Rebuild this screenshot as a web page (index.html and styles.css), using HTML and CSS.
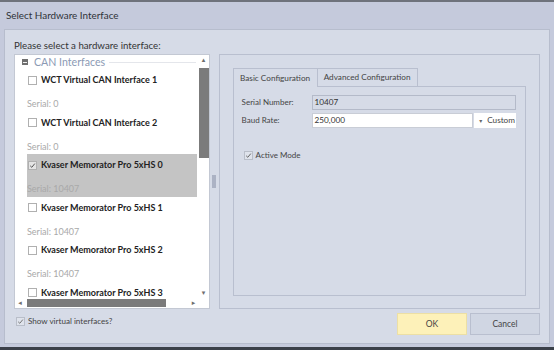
FILE: index.html
```html
<!DOCTYPE html>
<html lang="en">
<head>
  <meta charset="UTF-8" />
  <meta name="viewport" content="width=device-width, initial-scale=1.0"/>
  <title>Select Hardware Interface</title>
  <link rel="stylesheet" href="styles.css">
</head>
<body>

  <div class="top-edge"></div>
  <div class="title-bar">Select Hardware Interface</div>

  <div class="dialog">
    <div class="prompt">Please select a hardware interface:</div>

    <div class="main">
      <!-- Left: interface list -->
      <div class="list-box">
        <div class="list-content">
          <div class="group-header">
            <span class="collapse-box"></span>
            <span class="group-title">CAN Interfaces</span>
            <span class="group-line"></span>
          </div>

          <div class="item">
            <div class="item-title"><span class="check"></span>WCT Virtual CAN Interface 1</div>
            <div class="item-serial">Serial: 0</div>
          </div>
          <div class="item">
            <div class="item-title"><span class="check"></span>WCT Virtual CAN Interface 2</div>
            <div class="item-serial">Serial: 0</div>
          </div>
          <div class="item selected">
            <div class="item-title">
              <span class="check"><svg viewBox="0 0 7 7" width="7" height="7"><path d="M1.2 3.8 L2.8 5.3 L5.8 1.6" fill="none" stroke="#555" stroke-width="1"/></svg></span>Kvaser Memorator Pro 5xHS 0
            </div>
            <div class="item-serial">Serial: 10407</div>
          </div>
          <div class="item">
            <div class="item-title"><span class="check"></span>Kvaser Memorator Pro 5xHS 1</div>
            <div class="item-serial">Serial: 10407</div>
          </div>
          <div class="item">
            <div class="item-title"><span class="check"></span>Kvaser Memorator Pro 5xHS 2</div>
            <div class="item-serial">Serial: 10407</div>
          </div>
          <!-- last row is scrolled partly out of view; its serial line is hidden -->
          <div class="item">
            <div class="item-title"><span class="check"></span>Kvaser Memorator Pro 5xHS 3</div>
          </div>
        </div>

        <div class="vscroll">
          <span class="arrow">&#9652;</span>
          <div class="vtrack"><div class="vthumb"></div></div>
          <span class="arrow">&#9662;</span>
        </div>
        <div class="hscroll">
          <span class="arrow">&#9666;</span>
          <div class="htrack"><div class="hthumb"></div></div>
          <span class="arrow">&#9656;</span>
        </div>
        <div class="corner"></div>
      </div>

      <!-- Splitter -->
      <div class="splitter"><div class="grip"></div></div>

      <!-- Right: configuration -->
      <div class="config-group">
        <div class="tabs">
          <div class="tab active">Basic Configuration</div>
          <div class="tab">Advanced Configuration</div>
        </div>
        <div class="tab-page">
          <div class="field-row">
            <div class="field-label">Serial Number:</div>
            <div class="field-input readonly">10407</div>
          </div>
          <div class="field-row">
            <div class="field-label">Baud Rate:</div>
            <div class="field-input">250,000</div>
            <div class="field-drop"><span class="drop-arrow">&#9662;</span>Custom</div>
          </div>
          <div class="active-mode">
            <span class="check"><svg viewBox="0 0 7 7" width="7" height="7"><path d="M1.2 3.8 L2.8 5.3 L5.8 1.6" fill="none" stroke="#666" stroke-width="1"/></svg></span>
            <span>Active Mode</span>
          </div>
        </div>
      </div>
    </div>

    <div class="bottom">
      <div class="show-virtual">
        <span class="check"><svg viewBox="0 0 7 7" width="7" height="7"><path d="M1.2 3.8 L2.8 5.3 L5.8 1.6" fill="none" stroke="#777" stroke-width="1"/></svg></span>
        <span>Show virtual interfaces?</span>
      </div>
      <div class="buttons">
        <button class="btn ok">OK</button>
        <button class="btn">Cancel</button>
      </div>
    </div>
  </div>

  <div class="bottom-edge"></div>

</body>
</html>
```

FILE: styles.css
```css
html, body {
  margin: 0;
  padding: 0;
}

body {
  width: 554px;
  height: 350px;
  overflow: hidden;
  background: #c5cadc;
  font-family: "Lato", "Open Sans", sans-serif;
  font-size: 8.2px;
  color: #3a3a3a;
}

.top-edge {
  height: 2px;
  background: #6f737c;
}

.title-bar {
  height: 27px;
  line-height: 27px;
  padding-left: 6px;
  font-size: 9.9px;
  color: #2f3238;
}

.dialog {
  margin: 0 4px;
  padding: 8px 9px 0 9px;
  box-sizing: border-box;
  height: 315px;
  background: #d6dbe7;
  border: 1px solid #b7bdcd;
  display: flex;
  flex-direction: column;
}

.prompt {
  height: 16px;
  line-height: 14px;
  font-size: 9.7px;
  color: #333;
}

.main {
  display: flex;
  height: 255px;
}

/* list */
.list-box {
  width: 196px;
  box-sizing: border-box;
  border: 1px solid #c3c8d3;
  background: #fff;
  display: grid;
  grid-template-columns: 1fr 10px;
  grid-template-rows: 1fr 10px;
  overflow: hidden;
}

.list-content {
  overflow: hidden;
  padding-right: 1px;
}

.group-header {
  display: flex;
  align-items: center;
  height: 14px;
  padding-left: 7px;
}

.collapse-box {
  width: 6px;
  height: 6px;
  background: linear-gradient(#f2f2f2, #f2f2f2) center / 4px 1px no-repeat, #6f6f6f;
  margin-right: 6px;
  flex-shrink: 0;
}

.group-title {
  color: #8b9ab4;
  font-size: 10.6px;
  white-space: nowrap;
}

.group-line {
  flex: 1;
  height: 1px;
  background: #e4e6eb;
  margin: 1px 2px 0 4px;
}

.item {
  height: 42.5px;
  margin-left: 12px;
  width: 170px;
  box-sizing: border-box;
}

.item.selected {
  background: #c4c4c4;
}

.item-title {
  height: 22px;
  line-height: 22px;
  font-size: 9px;
  font-weight: bold;
  color: #222;
  display: flex;
  align-items: center;
  white-space: nowrap;
}

.item-serial {
  margin-top: 6px;
  line-height: 14px;
  font-size: 9px;
  color: #a9a9a9;
}

.check {
  display: inline-flex;
  align-items: center;
  justify-content: center;
  width: 7px;
  height: 7px;
  border: 1px solid #b0b0b0;
  background: #fff;
  margin: 0 4px 0 1px;
  flex-shrink: 0;
}

.item.selected .check {
  background: #e4e4e4;
}

/* scrollbars */
.vscroll, .hscroll {
  display: flex;
  align-items: center;
  background: #fff;
}

.vscroll {
  flex-direction: column;
}

.arrow {
  color: #6e6e6e;
  font-family: "DejaVu Sans", sans-serif;
  font-size: 7px;
  line-height: 10px;
  width: 10px;
  height: 10px;
  text-align: center;
}

.vtrack {
  flex: 1;
  width: 10px;
}

.vthumb {
  margin-top: 3px;
  height: 90px;
  background: #7b7b7b;
}

.htrack {
  flex: 1;
  height: 10px;
  display: flex;
  align-items: center;
}

.hthumb {
  margin-left: 2px;
  width: 139px;
  height: 8px;
  background: #7b7b7b;
}

.corner {
  background: #fff;
}

/* splitter */
.splitter {
  width: 9px;
  display: flex;
  align-items: center;
  justify-content: center;
}

.grip {
  width: 4px;
  height: 13px;
  background: radial-gradient(circle, #a9b0c2 0.7px, transparent 0.8px) 0 0 / 2px 2px;
}

/* configuration group */
.config-group {
  width: 322px;
  box-sizing: border-box;
  border: 1px solid #b9bfcf;
  padding: 13px 13px 12px 13px;
  display: flex;
  flex-direction: column;
}

.tabs {
  display: flex;
  align-items: flex-end;
  height: 18px;
}

.tab {
  height: 18px;
  line-height: 17px;
  box-sizing: border-box;
  border: 1px solid #b9bfcf;
  border-bottom: none;
  color: #444;
  width: 100px;
  text-align: center;
  white-space: nowrap;
}

.tab.active {
  width: 85px;
  height: 19px;
  line-height: 18px;
  margin-bottom: -1px;
  background: #d6dbe7;
  position: relative;
  z-index: 1;
}

.tab + .tab {
  border-left: none;
}

.tab-page {
  flex: 1;
  border: 1px solid #b9bfcf;
  padding: 8px 9px 0 8px;
}

.field-row {
  display: flex;
  height: 15px;
  margin-bottom: 3px;
  align-items: stretch;
}

.field-label {
  width: 70px;
  line-height: 15px;
  font-size: 8px;
  color: #444;
}

.field-input {
  flex: 1;
  box-sizing: border-box;
  border: 1px solid #c9cdd6;
  background: #fff;
  line-height: 13px;
  padding-left: 2px;
  color: #333;
}

.field-input.readonly {
  background: #d6dbe7;
  border-color: #b4bac9;
}

.field-drop {
  width: 42px;
  margin-left: 1px;
  background: #fff;
  line-height: 15px;
  color: #444;
  text-align: right;
  padding-right: 1px;
  box-sizing: border-box;
}

.drop-arrow {
  font-family: "DejaVu Sans", sans-serif;
  font-size: 6px;
  color: #666;
  margin-right: 5px;
}

.active-mode {
  display: flex;
  align-items: center;
  margin-top: 20px;
  margin-left: 1px;
  line-height: 14px;
  font-size: 8px;
  color: #444;
}

.active-mode .check, .show-virtual .check {
  background: #dfe3ec;
  border-color: #b9bec9;
  margin-right: 3px;
}

/* bottom row */
.bottom {
  display: flex;
  justify-content: space-between;
  align-items: flex-start;
  margin-top: 4px;
}

.show-virtual {
  display: flex;
  align-items: center;
  margin-top: 1px;
  margin-left: 1px;
  line-height: 14px;
  font-size: 8.1px;
  color: #444;
}

.buttons {
  display: flex;
  gap: 3px;
}

.btn {
  width: 70px;
  height: 22px;
  font-family: inherit;
  font-size: 8.5px;
  color: #444;
  border: 1px solid #b9bfcf;
  background: #d0d6e3;
  padding: 0;
}

.btn.ok {
  background: #fdf1b9;
  border-color: #ecdfa5;
}

.bottom-edge {
  margin-top: 3px;
  height: 3px;
  background: #3b4049;
}
```
